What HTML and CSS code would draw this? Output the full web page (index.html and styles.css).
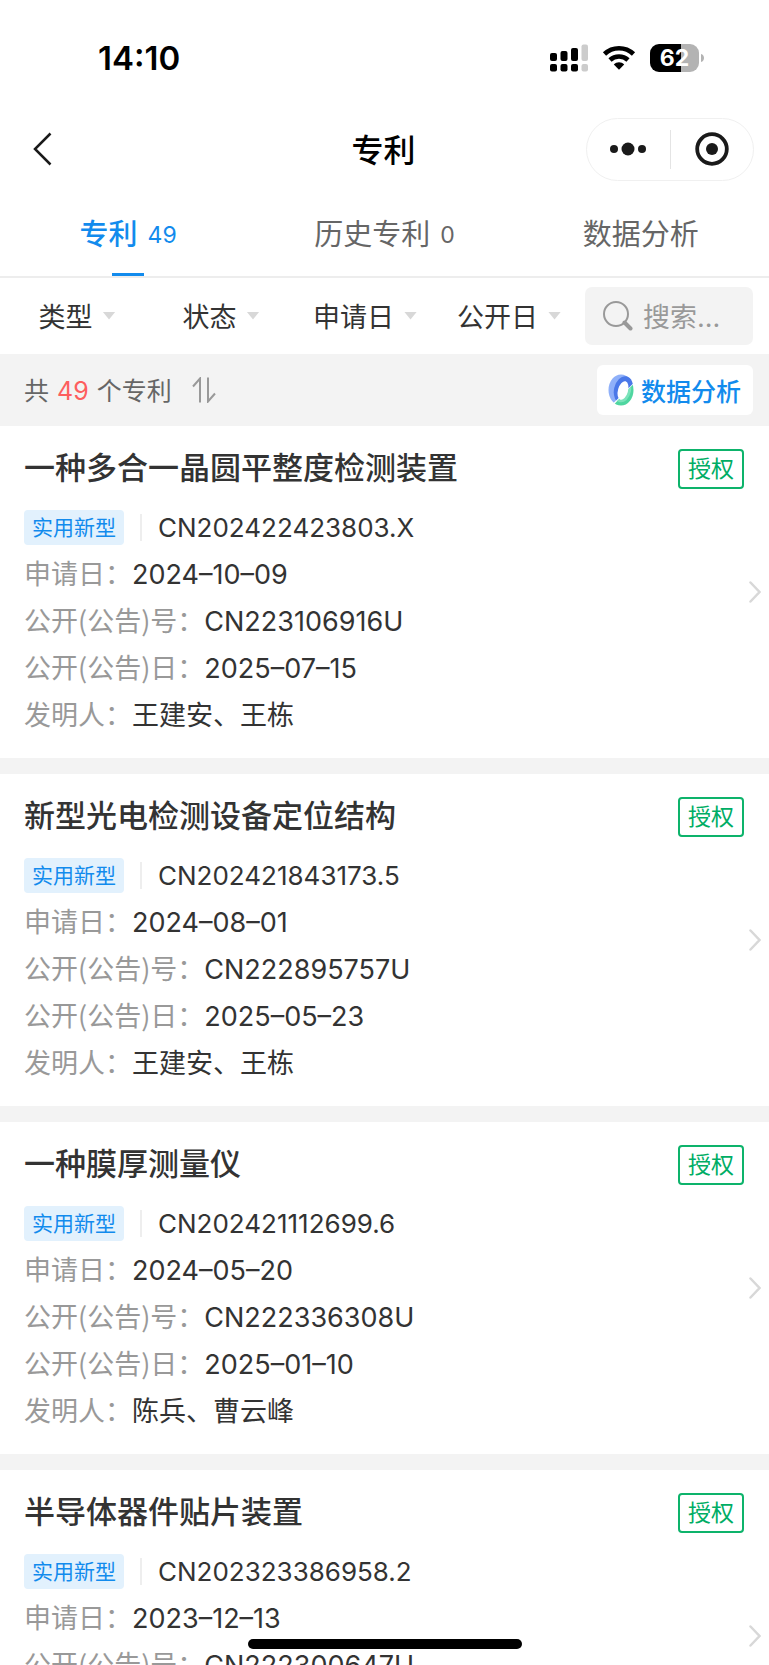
FILE: index.html
```html
<!DOCTYPE html>
<html lang="zh-CN">
<head>
<meta charset="utf-8">
<meta name="viewport" content="width=device-width, initial-scale=1">
<title>专利</title>
<link rel="stylesheet" href="styles.css">
</head>
<body>
<div class="app">
  <div class="status-bar">
    <time class="clock">14:10</time>
    <div class="indicators">
      <svg class="signal" viewBox="0 0 38 28" aria-hidden="true">
        <rect x="0" y="9" width="7" height="8" rx="2"/><rect x="10.500" y="7" width="7" height="10" rx="2"/><rect x="21" y="4" width="7" height="13" rx="2"/>
        <rect x="0" y="20" width="7" height="7.500" rx="2"/><rect x="10.500" y="20" width="7" height="7.500" rx="2"/><rect x="21" y="20" width="7" height="7.500" rx="2"/>
        <g fill="#ccc"><rect x="31.500" y="0.500" width="6.500" height="16.500" rx="2"/><rect x="31.500" y="20" width="6.500" height="7.500" rx="2"/></g>
      </svg>
      <svg class="wifi" viewBox="0 0 34 26" aria-hidden="true">
        <path d="M2.500 9C10.500 1.300 23.500 1.300 31.500 9" fill="none" stroke="#000" stroke-width="4.600"/>
        <path d="M8 15C13 10.300 21 10.300 26 15" fill="none" stroke="#000" stroke-width="4.600"/>
        <path d="M11.800 19.400C14.800 16.600 19.200 16.600 22.200 19.400L17 24.800Z"/>
      </svg>
      <div class="battery"><span class="battery-level">62</span><svg viewBox="0 0 4 10" aria-hidden="true"><path d="M0 1C4 2 4 8 0 9Z" fill="#b3b3b3"/></svg></div>
    </div>
  </div>

  <header class="nav">
    <button class="back" aria-label="返回"><svg viewBox="0 0 19 34"><path d="M17.500 1.500L2 17L17.500 32.500"/></svg></button>
    <h1 class="nav-title">专利</h1>
    <div class="capsule">
      <button aria-label="更多"><svg viewBox="0 0 38 16"><circle cx="5" cy="8" r="4"/><circle cx="19" cy="8" r="6.500"/><circle cx="33" cy="8" r="4"/></svg></button>
      <button aria-label="关闭"><svg class="target" viewBox="0 0 34 34"><circle cx="17" cy="17" r="14.800" fill="none" stroke="#1a1a1a" stroke-width="3.800"/><circle cx="17" cy="17" r="6"/></svg></button>
    </div>
  </header>

  <nav class="tabs">
    <a class="tab active" href="#patents">专利<span class="tab-count">49</span></a>
    <a class="tab" href="#history">历史专利<span class="tab-count">0</span></a>
    <a class="tab" href="#analysis">数据分析</a>
  </nav>

  <div class="filters">
    <div class="filter-list">
      <button class="filter">类型<i class="caret"></i></button>
      <button class="filter">状态<i class="caret"></i></button>
      <button class="filter">申请日<i class="caret"></i></button>
      <button class="filter">公开日<i class="caret"></i></button>
    </div>
    <label class="search">
      <svg viewBox="0 0 30 30" aria-hidden="true"><circle cx="13" cy="13" r="12" stroke-width="2"/><path d="M21.500 21.500L27.500 27.500" stroke-width="4"/></svg>
      <input type="search" placeholder="搜索..." aria-label="搜索">
    </label>
  </div>

  <div class="summary">
    <span class="total">共<b>49</b>个专利</span>
    <button class="sort" aria-label="排序"><svg viewBox="0 0 24 26"><path d="M1 9.500L8 1.500V25.500M16 0.500V24.500L23 16.500"/></svg></button>
    <button class="analysis">
      <svg viewBox="0 0 26 32" aria-hidden="true">
        <clipPath id="upper"><path d="M0 0H26V8.500L5 29.500L0 32Z"/></clipPath>
        <clipPath id="lower"><path d="M26 9.500V32H4.500Z"/></clipPath>
        <g clip-path="url(#upper)">
          <ellipse cx="13" cy="16" rx="12.500" ry="15.500" fill="#8fb0f9"/>
          <ellipse cx="15.500" cy="16" rx="9.500" ry="14" transform="rotate(12 15.500 16)" fill="#4a78e8"/>
        </g>
        <g clip-path="url(#lower)">
          <ellipse cx="13" cy="16" rx="12.500" ry="15.500" fill="#4fd6a0"/>
          <ellipse cx="14.500" cy="16" rx="8.500" ry="12.500" transform="rotate(12 14.500 16)" fill="#7be3ba"/>
        </g>
        <ellipse cx="15" cy="16.500" rx="5" ry="9.500" transform="rotate(16 15 16.500)" fill="#fff"/>
      </svg>
      数据分析
    </button>
  </div>

  <main class="list">
    <article class="card">
      <div class="card-body">
        <div class="card-head"><h2>一种多合一晶圆平整度检测装置</h2><span class="state">授权</span></div>
        <div class="ident"><span class="kind">实用新型</span><span class="number">CN202422423803.X</span></div>
        <dl>
          <div><dt>申请日：</dt><dd>2024–10–09</dd></div>
          <div><dt>公开(公告)号：</dt><dd>CN223106916U</dd></div>
          <div><dt>公开(公告)日：</dt><dd>2025–07–15</dd></div>
          <div><dt>发明人：</dt><dd>王建安、王栋</dd></div>
        </dl>
      </div>
      <svg class="chevron" viewBox="0 0 12 22" aria-hidden="true"><path d="M1.500 1.500L10.500 11L1.500 20.500"/></svg>
    </article>
    <article class="card">
      <div class="card-body">
        <div class="card-head"><h2>新型光电检测设备定位结构</h2><span class="state">授权</span></div>
        <div class="ident"><span class="kind">实用新型</span><span class="number">CN202421843173.5</span></div>
        <dl>
          <div><dt>申请日：</dt><dd>2024–08–01</dd></div>
          <div><dt>公开(公告)号：</dt><dd>CN222895757U</dd></div>
          <div><dt>公开(公告)日：</dt><dd>2025–05–23</dd></div>
          <div><dt>发明人：</dt><dd>王建安、王栋</dd></div>
        </dl>
      </div>
      <svg class="chevron" viewBox="0 0 12 22" aria-hidden="true"><path d="M1.500 1.500L10.500 11L1.500 20.500"/></svg>
    </article>
    <article class="card">
      <div class="card-body">
        <div class="card-head"><h2>一种膜厚测量仪</h2><span class="state">授权</span></div>
        <div class="ident"><span class="kind">实用新型</span><span class="number">CN202421112699.6</span></div>
        <dl>
          <div><dt>申请日：</dt><dd>2024–05–20</dd></div>
          <div><dt>公开(公告)号：</dt><dd>CN222336308U</dd></div>
          <div><dt>公开(公告)日：</dt><dd>2025–01–10</dd></div>
          <div><dt>发明人：</dt><dd>陈兵、曹云峰</dd></div>
        </dl>
      </div>
      <svg class="chevron" viewBox="0 0 12 22" aria-hidden="true"><path d="M1.500 1.500L10.500 11L1.500 20.500"/></svg>
    </article>
    <article class="card">
      <div class="card-body">
        <div class="card-head"><h2>半导体器件贴片装置</h2><span class="state">授权</span></div>
        <div class="ident"><span class="kind">实用新型</span><span class="number">CN202323386958.2</span></div>
        <dl>
          <div><dt>申请日：</dt><dd>2023–12–13</dd></div>
          <div><dt>公开(公告)号：</dt><dd>CN222300647U</dd></div>
        </dl>
      </div>
      <svg class="chevron" viewBox="0 0 12 22" aria-hidden="true"><path d="M1.500 1.500L10.500 11L1.500 20.500"/></svg>
    </article>
  </main>
  <div class="home-indicator"></div>
</div>
</body>
</html>
```
FILE: styles.css
```css
* { box-sizing: border-box; }
body, h1, h2, dl, dd { margin: 0; }
body {
  background: #fff;
  color: #333;
  font-family: Inter, "Noto Sans CJK SC", sans-serif;
  font-size: 27px;
}
button, input {
  border: 0;
  padding: 0;
  background: none;
  color: inherit;
  font: inherit;
}
svg { display: block; flex: none; }

.app {
  position: relative;
  display: flex;
  flex-direction: column;
  height: 100vh;
  overflow: hidden;
}

.status-bar {
  flex: none;
  display: flex;
  align-items: center;
  justify-content: space-between;
  height: 116px;
  padding: 0 64px 0 98px;
  color: #000;
}
.clock { font-size: 33px; font-weight: 600; }
.indicators { display: flex; align-items: center; gap: 14px; }
.signal { width: 38px; height: 28px; }
.wifi { width: 34px; height: 26px; }
.battery { display: flex; align-items: center; gap: 2px; }
.battery svg { width: 4px; height: 10px; }
.battery-level {
  width: 49px;
  border-radius: 9px;
  background: linear-gradient(90deg, #000 63%, #b3b3b3 63%);
  color: #fff;
  font-size: 23px;
  font-weight: 700;
  line-height: 28px;
  text-align: center;
}

.nav {
  flex: none;
  display: grid;
  grid-template-columns: 1fr auto 1fr;
  align-items: center;
  height: 66px;
  padding: 0 15px 0 33px;
}
.back { justify-self: start; }
.back svg { width: 19px; height: 34px; fill: none; stroke: #1a1a1a; stroke-width: 2.5; }
.nav-title { padding: 3px 20px 0 0; color: #000; font-size: 32px; font-weight: 500; line-height: 48px; }
.capsule {
  justify-self: end;
  display: flex;
  align-items: center;
  width: 168px;
  height: 63px;
  border: 1px solid #f0f0f0;
  border-radius: 32px;
}
.capsule button { flex: 1; display: flex; justify-content: center; align-items: center; height: 39px; }
.capsule button + button { border-left: 1px solid #e4e4e4; }
.capsule svg { width: 38px; height: 16px; fill: #1a1a1a; }
.capsule .target { width: 34px; height: 34px; }

.tabs { flex: none; display: flex; height: 96px; border-bottom: 2px solid #ededed; }
.tab {
  flex: 1;
  position: relative;
  display: flex;
  justify-content: center;
  align-items: center;
  gap: 10px;
  padding-top: 12px;
  color: #666;
  font-size: 29px;
  line-height: 44px;
  text-decoration: none;
}
.tab-count { font-size: 23px; }
.tab.active { color: #128bed; font-weight: 500; }
.tab.active .tab-count { font-weight: 400; }
.tab.active::after {
  content: "";
  position: absolute;
  bottom: 0;
  left: calc(50% - 16px);
  width: 32px;
  height: 3px;
  background: #128bed;
}

.filters { flex: none; display: flex; align-items: center; height: 76px; padding: 0 16px 0 5px; gap: 4px; }
.filter-list { flex: 1; display: flex; padding-top: 3px; }
.filter { flex: 1; display: flex; align-items: center; justify-content: center; gap: 10px; line-height: 40px; white-space: nowrap; }
.caret { width: 13px; height: 8px; margin-bottom: 4px; background: #d8d8d8; clip-path: polygon(0 0, 100% 0, 50% 100%); }
.search {
  display: flex;
  align-items: center;
  gap: 10px;
  width: 168px;
  height: 58px;
  padding: 0 8px 0 18px;
  border-radius: 7px;
  background: #f3f3f3;
}
.search svg { width: 30px; height: 30px; fill: none; stroke: #999; stroke-linecap: round; }
.search input { flex: 1; min-width: 0; padding-top: 3px; outline: 0; }
.search input::placeholder { color: #999; opacity: 1; }

.summary {
  flex: none;
  display: flex;
  align-items: center;
  height: 72px;
  padding: 0 16px 0 24px;
  background: #f3f3f3;
  color: #666;
  font-size: 25px;
}
.total { padding-bottom: 3px; }
.total b { margin: 0 8px; color: #fd5e5e; font-weight: 400; }
.sort { margin-left: 20px; }
.sort svg { width: 24px; height: 26px; fill: none; stroke: #999; stroke-width: 2; }
.analysis {
  display: flex;
  align-items: center;
  gap: 7px;
  height: 50px;
  margin-left: auto;
  padding: 0 12px 0 11px;
  border-radius: 6px;
  background: #fff;
  color: #128bed;
  font-weight: 500;
}
.analysis svg { width: 26px; height: 32px; }

.list { flex: 1; min-height: 0; overflow: hidden; display: flex; flex-direction: column; gap: 16px; background: #f3f3f3; }
.card {
  flex: none;
  display: flex;
  align-items: center;
  gap: 5px;
  min-height: 332px;
  padding: 0 8px 0 24px;
  background: #fff;
}
.card-body { flex: 1; align-self: flex-start; padding: 20px 0 18px; }
.card-head { display: flex; align-items: center; justify-content: space-between; height: 46px; margin-bottom: 12px; }
.card-head h2 { padding-bottom: 2px; font-size: 31px; font-weight: 500; line-height: 44px; }
.state {
  padding: 0 8px;
  border: 2px solid #0db36b;
  border-radius: 4px;
  color: #00ad65;
  font-size: 23px;
  line-height: 36px;
}
.ident { display: flex; align-items: center; height: 47px; }
.kind {
  padding: 0 8px;
  border-radius: 4px;
  background: #e2f1fd;
  color: #128bed;
  font-size: 21px;
  line-height: 35px;
}
.number { margin-left: 16px; padding-left: 16px; border-left: 2px solid #eee; font-size: 26px; line-height: 27px; }
.card dl > div { display: flex; align-items: baseline; height: 47px; line-height: 48px; }
.card dt { color: #999; font-family: "Noto Sans CJK SC", sans-serif; line-height: 40px; }
.chevron { width: 12px; height: 22px; fill: none; stroke: #d8d8d8; stroke-width: 2.5; stroke-linecap: round; }

.home-indicator {
  position: absolute;
  bottom: 16px;
  left: 50%;
  width: 274px;
  height: 10px;
  margin-left: -137px;
  border-radius: 5px;
  background: #000;
}
```
